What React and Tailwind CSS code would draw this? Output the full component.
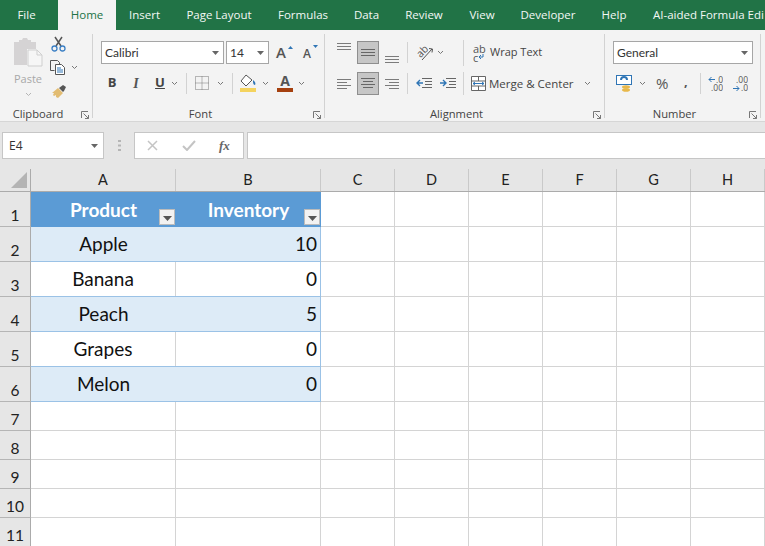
import React from "react";

const ui = { fontFamily: '"Open Sans", "Noto Sans", sans-serif' };
const cal = { fontFamily: 'Lato, "Noto Sans", sans-serif' };

const Chev = ({ className = "" }) => (
  <svg width="7" height="5" viewBox="0 0 7 5" className={`shrink-0 ${className}`}>
    <path d="M1 1l2.5 2.5L6 1" fill="none" stroke="#777" strokeWidth="1" />
  </svg>
);
const Tri = ({ className = "" }) => (
  <svg width="7" height="4" viewBox="0 0 7 4" className={`shrink-0 ${className}`}>
    <path d="M0 0h7L3.500 4z" fill="#666" />
  </svg>
);
const Launcher = () => (
  <svg width="8" height="8" viewBox="0 0 8 8" className="shrink-0">
    <path d="M.5 7V.5H7M2.500 2.500l5 5M7.500 4v3.500H4" fill="none" stroke="#777" strokeWidth="1" />
  </svg>
);
const VSep = ({ h = "h-[22px]", cls = "" }) => <div className={`w-px bg-[#d2d2d2] shrink-0 ${h} ${cls}`} />;

const AlignIcon = ({ d }) => (
  <svg width="16" height="14" viewBox="0 0 16 14" className="shrink-0">
    <path d={d} fill="none" stroke="#7b7b7b" strokeWidth="1" />
  </svg>
);

const Group = ({ w, label, children }) => (
  <div className={`${w} shrink-0 h-full flex flex-col border-r border-[#d2d2d2]`}>
    <div className="flex-1 min-h-0 relative">{children}</div>
    <div className="h-[16px] mb-[-4px] flex items-center relative text-[11.2px] leading-none text-[#444]" style={ui}>
      <div className="flex-1 text-center pr-[16px]">{label}</div>
      <div className="absolute right-[3px] top-[5px]"><Launcher /></div>
    </div>
  </div>
);

const tabs = [
  ["File", "w-[58px] pr-[5px]"],
  ["Home", "w-[58px]"],
  ["Insert", "w-[57px]"],
  ["Page Layout", "w-[92px]"],
  ["Formulas", "w-[76px]"],
  ["Data", "w-[51px]"],
  ["Review", "w-[64px]"],
  ["View", "w-[52px]"],
  ["Developer", "w-[80px]"],
  ["Help", "w-[52px]"],
];

function Tabs() {
  return (
    <div className="h-[30px] bg-[#217346] flex items-center text-[#f3f8f5] text-[11.5px] overflow-hidden whitespace-nowrap" style={ui}>
      {tabs.map(([t, w]) => (
        <div key={t} className={`${w} h-full shrink-0 flex items-center justify-center ${t === "Home" ? "bg-[#f3f3f3] text-[#217346]" : ""}`}>{t}</div>
      ))}
      <div className="pl-[13px] shrink-0">AI-aided Formula Edi</div>
    </div>
  );
}

function Clipboard() {
  return (
    <Group w="w-[93px]" label="Clipboard">
      <div className="flex pl-[13px] pt-[3px]">
        <div className="w-[30px] flex flex-col items-center">
          <svg width="30" height="30" viewBox="0 0 30 30">
            <path d="M1 5h5V3h3l1-2h4l1 2h3v2h5v7H14v16H1z" fill="#d5d3d4" />
            <path d="M15 13h9l5 5v11H15z" fill="#f6f6f6" stroke="#cfcfcf" />
            <path d="M24 13v5h5" fill="none" stroke="#cfcfcf" />
          </svg>
          <div className="text-[11px] text-[#a8a8a8] leading-none mt-[6px]" style={ui}>Paste</div>
          <Chev className="mt-[8px] opacity-50" />
        </div>
        <div className="flex flex-col pl-[8px] mt-[-1px]">
          <svg width="15" height="16" viewBox="0 0 15 16">
            <path d="M4 1l6 9M11 1l-6 9" fill="none" stroke="#555" strokeWidth="1.5" />
            <circle cx="3.500" cy="12.500" r="2.500" fill="none" stroke="#3b7fc4" strokeWidth="1.3" />
            <circle cx="11.500" cy="12.500" r="2.500" fill="none" stroke="#3b7fc4" strokeWidth="1.3" />
          </svg>
          <div className="flex items-center mt-[8px] gap-[5px] ml-[-1px]">
            <svg width="16" height="15" viewBox="0 0 16 15">
              <path d="M.5.500h7l2 2v2M.5.500v10h4" fill="none" stroke="#555" />
              <path d="M5.500 4.500h6l3 3v7h-9z" fill="#fff" stroke="#555" />
              <path d="M7 8h4M7 10h6M7 12h6" stroke="#2f75b5" />
            </svg>
            <Chev />
          </div>
          <svg width="17" height="15" viewBox="0 0 17 15" className="mt-[9px]">
            <path d="M1 9l6-5 5 5-5 5-2-1 0-2-2 1-1-1 1-2z" fill="#e2bc72" />
            <path d="M8 4l4-3 3 2-2 4-1 1z" fill="#555" />
          </svg>
        </div>
      </div>
    </Group>
  );
}

function Font() {
  return (
    <Group w="w-[232px]" label="Font">
      <div className="pl-[8px] pt-[7px]">
        <div className="flex items-center h-[23px]">
          <div className="w-[123px] h-full bg-white border border-[#a6a6a6] flex items-center justify-between pl-[3px] pr-[4px] text-[12px] text-[#333]" style={cal}>
            Calibri <Tri />
          </div>
          <div className="w-[43px] h-full ml-[2px] bg-white border border-[#a6a6a6] flex items-center justify-between pl-[3px] pr-[4px] text-[12px] text-[#333]" style={cal}>
            14 <Tri />
          </div>
          <div className="ml-[7px] relative text-[15px] leading-none text-[#555] font-semibold w-[15px]" style={ui}>
            A
            <svg width="5" height="3" viewBox="0 0 5 3" className="absolute right-[-2px] top-[1px]"><path d="M0 3h5L2.500 0z" fill="#2f75b5" /></svg>
          </div>
          <div className="ml-[12px] relative text-[12px] leading-none text-[#555] font-semibold w-[13px] pt-[3px]" style={ui}>
            A
            <svg width="5" height="3" viewBox="0 0 5 3" className="absolute right-[-2px] top-0"><path d="M0 0h5L2.500 3z" fill="#2f75b5" /></svg>
          </div>
        </div>
        <div className="flex items-center h-[22px] mt-[8px]">
          <div className="w-[20px] ml-[1px] text-center text-[13px] font-bold text-[#444]" style={ui}>B</div>
          <div className="w-[16px] ml-[6px] text-center text-[14px] italic font-bold text-[#555]" style={{ fontFamily: '"Liberation Serif", serif' }}>I</div>
          <div className="w-[16px] ml-[8px] text-center text-[13px] font-bold underline text-[#444]" style={ui}>U</div>
          <Chev className="ml-[3px]" />
          <VSep h="h-[21px]" cls="ml-[8px]" />
          <svg width="14" height="14" viewBox="0 0 14 14" className="ml-[8px]">
            <path d="M.5.500h13v13H.5zM7 .5v13M.5 7h13" fill="none" stroke="#777" strokeDasharray="1 1" />
          </svg>
          <Chev className="ml-[8px]" />
          <VSep h="h-[21px]" cls="ml-[8px]" />
          <svg width="17" height="19" viewBox="0 0 17 19" className="ml-[7px]">
            <path d="M6 1l-5 6 5 5 6-6z" fill="#fff" stroke="#555" />
            <path d="M13 6c2 2 3 3 2 5-2 0-2-3-2-5z" fill="#2f75b5" />
            <rect x="0" y="14" width="16" height="4" fill="#f4d35e" />
          </svg>
          <Chev className="ml-[5px]" />
          <div className="ml-[8px] w-[16px] flex flex-col items-center">
            <div className="text-[14px] leading-[14px] font-bold text-[#555]" style={ui}>A</div>
            <div className="w-[16px] h-[4px] bg-[#a5400f]" />
          </div>
          <Chev className="ml-[5px]" />
        </div>
      </div>
    </Group>
  );
}

function Alignment() {
  const lines = (ys, left, right) => ys.map((y) => `M${left} ${y}H${right}`).join("");
  return (
    <Group w="w-[280px]" label="Alignment">
      <div className="pl-[12px] pt-[7px]">
        <div className="flex items-center h-[23px]">
          <div className="w-[15px] flex self-start pt-[1px]"><AlignIcon d={lines([1.5, 4.5, 7.5], 0, 14)} /></div>
          <div className="ml-[5px] w-[22px] h-[23px] bg-[#c6c6c6] border border-[#8e8e8e] flex items-center justify-center">
            <svg width="14" height="8" viewBox="0 0 14 8"><path d={lines([.5, 3.5, 6.5], 0, 14)} stroke="#666" /></svg>
          </div>
          <div className="ml-[6px] w-[15px] flex self-end"><AlignIcon d={lines([6.5, 9.5, 12.5], 0, 14)} /></div>
          <VSep h="h-[21px]" cls="ml-[7px]" />
          <div className="ml-[8px] w-[17px] h-[16px] relative">
            <div className="absolute left-0 top-[1px] text-[10.5px] leading-none text-[#555] -rotate-45" style={ui}>ab</div>
            <svg width="17" height="16" viewBox="0 0 17 16" className="absolute left-0 top-0">
              <path d="M6 15L16 4M13 3.500l3.500.5-.5 3.500" fill="none" stroke="#555" />
            </svg>
          </div>
          <Chev className="ml-[4px]" />
          <VSep h="h-[26px]" cls="ml-[19px]" />
          <div className="ml-[9px] flex items-center">
            <div className="w-[14px] text-[11px] text-[#555]" style={ui}>
              <div className="h-[9px] leading-[9px] overflow-hidden">ab</div>
              <div className="h-[9px] leading-[9px] flex items-center overflow-hidden">c<svg width="6" height="6" viewBox="0 0 6 6"><path d="M5 0v3H1M3 1L1 3l2 2" fill="none" stroke="#2f75b5" /></svg></div>
            </div>
            <div className="ml-[3px] text-[11px] text-[#444]" style={ui}>Wrap Text</div>
          </div>
        </div>
        <div className="flex items-center h-[23px] mt-[8px]">
          <div className="w-[15px]"><AlignIcon d="M0 2.500h14M0 5.500h10M0 8.500h14M0 11.500h10" /></div>
          <div className="ml-[5px] w-[22px] h-[23px] bg-[#c6c6c6] border border-[#8e8e8e] flex items-center justify-center">
            <svg width="14" height="11" viewBox="0 0 14 11"><path d="M0 .5h14M2 3.500h10M0 6.500h14M2 9.500h10" stroke="#666" /></svg>
          </div>
          <div className="ml-[6px] w-[15px]"><AlignIcon d="M0 2.500h14M4 5.500h10M0 8.500h14M4 11.500h10" /></div>
          <VSep h="h-[21px]" cls="ml-[7px]" />
          <svg width="16" height="12" viewBox="0 0 16 12" className="ml-[8px]">
            <path d="M6 .5h10M9 3.500h7M9 6.500h7M6 9.500h10" stroke="#666" />
            <path d="M7 5H1M4 2L1 5l3 3" fill="none" stroke="#2f75b5" strokeWidth="1.4" />
          </svg>
          <svg width="16" height="12" viewBox="0 0 16 12" className="ml-[8px]">
            <path d="M6 .5h10M9 3.500h7M9 6.500h7M6 9.500h10" stroke="#666" />
            <path d="M0 5h6M3 2l3 3-3 3" fill="none" stroke="#2f75b5" strokeWidth="1.4" />
          </svg>
          <VSep h="h-[23px]" cls="ml-[7px]" />
          <svg width="15" height="15" viewBox="0 0 15 15" className="ml-[7px]">
            <path d="M.5.500h14v14H.5zM.5 5h14M.5 10h14M7.500.5V5M7.500 10v4.500" fill="#fff" stroke="#666" />
            <path d="M2 7.500h11M4 6L2 7.500 4 9M11 6l2 1.500L11 9" fill="none" stroke="#2f75b5" />
          </svg>
          <div className="ml-[3px] text-[11.5px] text-[#444]" style={ui}>Merge &amp; Center</div>
          <Chev className="ml-[10px]" />
        </div>
      </div>
    </Group>
  );
}

function NumberGroup() {
  return (
    <Group w="w-[156px]" label="Number">
      <div className="pl-[8px] pt-[7px]">
        <div className="w-[140px] h-[23px] bg-white border border-[#a6a6a6] flex items-center justify-between pl-[3px] pr-[4px] text-[12px] text-[#333]" style={cal}>
          General <Tri />
        </div>
        <div className="flex items-center h-[21px] mt-[9px]">
          <svg width="17" height="18" viewBox="0 0 17 18" className="ml-[3px]">
            <rect x=".5" y=".5" width="15" height="9" fill="#fff" stroke="#2f75b5" />
            <path d="M5 5a3 3 0 0 1 6 0" fill="none" stroke="#2f75b5" strokeWidth="2" />
            <ellipse cx="10" cy="12" rx="4" ry="1.800" fill="#e8b84a" />
            <ellipse cx="10" cy="15" rx="4" ry="1.800" fill="#e8b84a" />
          </svg>
          <Chev className="ml-[6px]" />
          <div className="ml-[10px] w-[15px] text-[15px] text-[#555] leading-none" style={ui}>%</div>
          <div className="ml-[13px] w-[6px] text-[13px] font-bold text-[#555] leading-none mt-[-5px]" style={ui}>,</div>
          <VSep h="h-[21px]" cls="ml-[10px]" />
          <div className="ml-[7px] w-[15px] relative text-[8.5px] text-[#555] text-right" style={ui}>
            <div className="h-[8px] leading-[8px] pl-[7px] overflow-hidden">.0</div>
            <div className="h-[8px] leading-[8px] overflow-hidden">.00</div>
            <svg width="7" height="7" viewBox="0 0 7 7" className="absolute left-0 top-0"><path d="M7 3.500H1M3.500 1L1 3.500 3.500 6" fill="none" stroke="#2f75b5" /></svg>
          </div>
          <div className="ml-[10px] w-[15px] relative text-[8.5px] text-[#555] text-right" style={ui}>
            <div className="h-[8px] leading-[8px] overflow-hidden">.00</div>
            <div className="h-[8px] leading-[8px] pl-[7px] overflow-hidden">.0</div>
            <svg width="7" height="7" viewBox="0 0 7 7" className="absolute left-0 bottom-0"><path d="M0 3.500h6M3.500 1L6 3.500 3.500 6" fill="none" stroke="#2f75b5" /></svg>
          </div>
        </div>
      </div>
    </Group>
  );
}

function FormulaBar() {
  return (
    <div className="h-[47px] bg-[#e6e6e6] pt-[10px] pb-[10px] pl-[2px] flex items-stretch">
      <div className="w-[102px] bg-white border border-[#c6c6c6] flex items-center justify-between pl-[6px] pr-[5px] text-[12px] text-[#333]" style={ui}>
        <span className="pt-[1px]">E4</span> <Tri />
      </div>
      <div className="w-[30px] flex items-center justify-center text-[#aaa]">
        <svg width="3" height="11" viewBox="0 0 3 11"><path d="M0 0h3v2H0zM0 4.500h3v2H0zM0 9h3v2H0z" fill="#b5b5b5" /></svg>
      </div>
      <div className="w-[110px] bg-white border border-[#c6c6c6] flex items-center pl-[12px]">
        <svg width="11" height="11" viewBox="0 0 11 11"><path d="M1 1l9 9M10 1l-9 9" stroke="#c4c4c4" strokeWidth="1.500" /></svg>
        <svg width="14" height="11" viewBox="0 0 14 11" className="ml-[24px]"><path d="M1 6l4 4 8-9" fill="none" stroke="#c4c4c4" strokeWidth="2" /></svg>
        <div className="ml-[23px] text-[13px] italic font-bold text-[#666] leading-none" style={{ fontFamily: '"Liberation Serif", serif' }}>fx</div>
      </div>
      <div className="flex-1 ml-[3px] bg-white border-y border-l border-[#c6c6c6]" />
    </div>
  );
}

const colW = ["w-[145px]", "w-[145px]", "w-[74px]", "w-[74px]", "w-[74px]", "w-[74px]", "w-[74px]", "w-[74px]", "w-[74px]"];
const cols = ["A", "B", "C", "D", "E", "F", "G", "H", ""];

function ColumnHeader() {
  return (
    <div className="h-[23px] flex bg-[#e6e6e6] border-b border-[#ababab] text-[#222] text-[14.5px]" style={cal}>
      <div className="w-[31px] shrink-0 border-r border-[#ababab] relative">
        <svg width="16" height="16" viewBox="0 0 16 16" className="absolute right-[3px] bottom-[3px]"><path d="M16 0v16H0z" fill="#b4b4b4" /></svg>
      </div>
      {cols.map((c, i) => (
        <div key={i} className={`${colW[i]} shrink-0 flex items-center justify-center ${i < 8 ? "border-r border-[#c9c9c9]" : ""}`}>{c}</div>
      ))}
    </div>
  );
}

const FilterBtn = () => (
  <div className="absolute right-[1px] bottom-[2px] w-[16px] h-[16px] bg-[#f2f2f2] border border-[#bcbcbc] flex items-center justify-center pt-[3px]">
    <svg width="9" height="5" viewBox="0 0 9 5"><path d="M0 0h9L4.500 5z" fill="#555" /></svg>
  </div>
);

const RowNum = ({ n }) => (
  <div className="w-[31px] shrink-0 bg-[#e6e6e6] border-r border-b border-r-[#ababab] border-b-[#b5b5b5] flex items-end justify-center pb-[1px] text-[15.5px] leading-[20px] text-[#222]" style={cal}>{n}</div>
);

const EmptyCells = () =>
  colW.slice(2).map((w, i) => <div key={i} className={`${w} shrink-0 border-r border-b border-[#d4d4d4]`} />);

function Sheet() {
  const data = [["Apple", 10], ["Banana", 0], ["Peach", 5], ["Grapes", 0], ["Melon", 0]];
  return (
    <div className="overflow-hidden">
      <ColumnHeader />
      <div className="h-[35px] flex">
        <RowNum n={1} />
        <div className="flex w-[290px] shrink-0 bg-[#5b9bd5] text-white font-bold text-[19px]" style={cal}>
          <div className="w-[145px] relative flex items-start justify-center pt-[4px]">Product<FilterBtn /></div>
          <div className="w-[145px] relative flex items-start justify-center pt-[4px]">Inventory<FilterBtn /></div>
        </div>
        <EmptyCells />
      </div>
      {data.map(([p, v], i) => {
        const band = i % 2 === 0;
        return (
          <div key={p} className="h-[35px] flex">
            <RowNum n={i + 2} />
            <div className={`flex w-[290px] shrink-0 text-[19px] text-[#111] border-r border-b border-[#9bc2e6] ${band ? "bg-[#ddebf7]" : "bg-white"}`} style={cal}>
              <div className={`w-[145px] shrink-0 flex items-center justify-center ${band ? "" : "border-r border-[#d4d4d4]"}`}>{p}</div>
              <div className="flex-1 flex items-center justify-end pr-[3px]">{v}</div>
            </div>
            <EmptyCells />
          </div>
        );
      })}
      {[7, 8, 9, 10, 11].map((n) => (
        <div key={n} className="h-[29px] flex">
          <RowNum n={n} />
          {colW.slice(0, 2).map((w, i) => <div key={i} className={`${w} shrink-0 border-r border-b border-[#d4d4d4]`} />)}
          <EmptyCells />
        </div>
      ))}
    </div>
  );
}

export default function App() {
  return (
    <div className="w-[765px] h-[546px] overflow-hidden bg-white">
      <Tabs />
      <div className="h-[92px] bg-[#f3f3f3] border-b border-[#d6d6d6] flex overflow-hidden pt-[4px] pb-[3px]">
        <Clipboard />
        <Font />
        <Alignment />
        <NumberGroup />
      </div>
      <FormulaBar />
      <Sheet />
    </div>
  );
}
